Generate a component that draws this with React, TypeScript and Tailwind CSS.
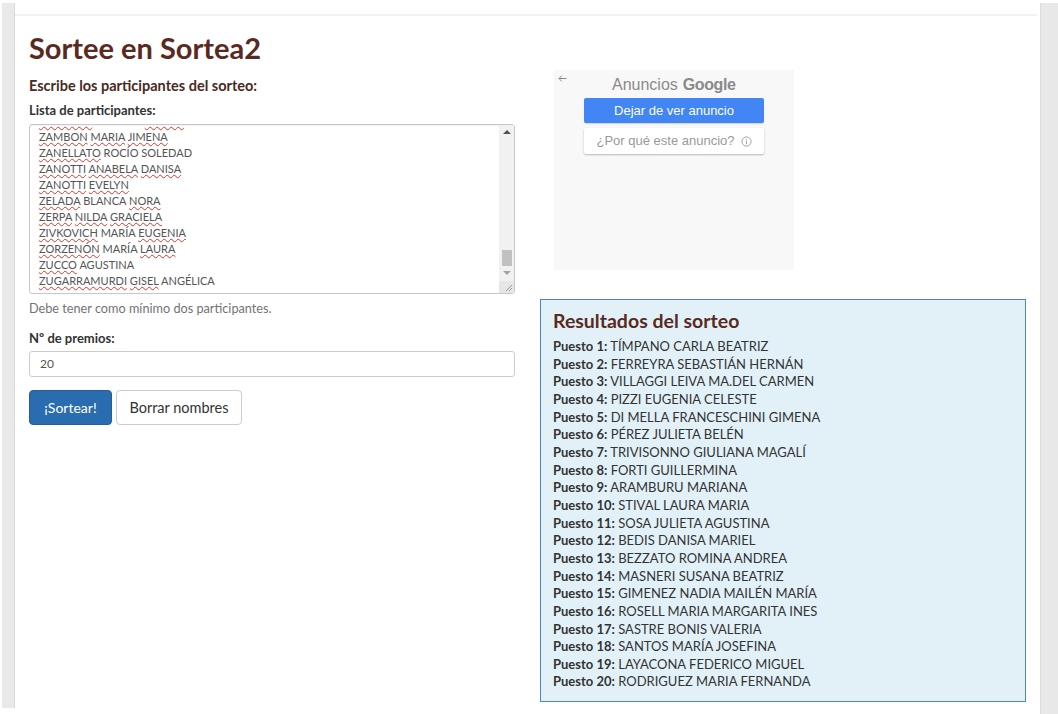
import React from 'react';

const names: { words: [string, boolean][] }[] = [
  { words: [['ZABALETA', true], ['VIRGINIA', false], ['LETICIA', true]] },
  { words: [['ZAMBON', true], ['MARIA', true], ['JIMENA', true]] },
  { words: [['ZANELLATO', true], ['ROCÍO', false], ['SOLEDAD', false]] },
  { words: [['ZANOTTI', true], ['ANABELA', true], ['DANISA', true]] },
  { words: [['ZANOTTI', true], ['EVELYN', true]] },
  { words: [['ZELADA', true], ['BLANCA', false], ['NORA', true]] },
  { words: [['ZERPA', true], ['NILDA', true], ['GRACIELA', true]] },
  { words: [['ZIVKOVICH', true], ['MARÍA', false], ['EUGENIA', true]] },
  { words: [['ZORZENÓN', true], ['MARÍA', false], ['LAURA', true]] },
  { words: [['ZUCCO', true], ['AGUSTINA', false]] },
  { words: [['ZUGARRAMURDI', true], ['GISEL', true], ['ANGÉLICA', false]] },
];

const results = [
  'TÍMPANO CARLA BEATRIZ',
  'FERREYRA SEBASTIÁN HERNÁN',
  'VILLAGGI LEIVA MA.DEL CARMEN',
  'PIZZI EUGENIA CELESTE',
  'DI MELLA FRANCESCHINI GIMENA',
  'PÉREZ JULIETA BELÉN',
  'TRIVISONNO GIULIANA MAGALÍ',
  'FORTI GUILLERMINA',
  'ARAMBURU MARIANA',
  'STIVAL LAURA MARIA',
  'SOSA JULIETA AGUSTINA',
  'BEDIS DANISA MARIEL',
  'BEZZATO ROMINA ANDREA',
  'MASNERI SUSANA BEATRIZ',
  'GIMENEZ NADIA MAILÉN MARÍA',
  'ROSELL MARIA MARGARITA INES',
  'SASTRE BONIS VALERIA',
  'SANTOS MARÍA JOSEFINA',
  'LAYACONA FEDERICO MIGUEL',
  'RODRIGUEZ MARIA FERNANDA',
];

function ParticipantsBox() {
  return (
    <div className="mt-[5px] flex h-[170px] rounded-[3px] border border-[#c8c8c8] bg-white shadow-[inset_0_1px_1px_rgba(0,0,0,0.06)]">
      <div className="flex-1 overflow-hidden pl-[9px]">
        <div className="-mt-[12px] text-[11px] leading-[16px] text-[#555]">
          {names.map((n, i) => (
            <div key={i} className="whitespace-nowrap">
              {n.words.map(([w, bad], j) => (
                <React.Fragment key={j}>
                  {j > 0 && ' '}
                  <span
                    className={
                      bad
                        ? 'underline decoration-wavy decoration-[#e0302a] decoration-1 underline-offset-[1px]'
                        : ''
                    }
                  >
                    {w}
                  </span>
                </React.Fragment>
              ))}
            </div>
          ))}
        </div>
      </div>
      {/* scrollbar */}
      <div className="flex w-[15px] flex-col items-center bg-[#f1f1f1]">
        <div className="mt-[5px] h-0 w-0 border-x-[4px] border-b-[4px] border-x-transparent border-b-[#505050]" />
        <div className="flex-1" />
        <div className="h-[16px] w-[10px] bg-[#c1c1c1]" />
        <div className="mt-[5px] h-0 w-0 border-x-[4px] border-t-[4px] border-x-transparent border-t-[#a3a3a3]" />
        <div className="mt-[6px] flex h-[12px] w-[15px] items-end justify-end bg-[#e6e6e6] pb-[1px] pr-[1px]">
          <svg width="8" height="8" viewBox="0 0 8 8">
            <path d="M7 1 L1 7 M7 4 L4 7" stroke="#9a9a9a" strokeWidth="1" />
          </svg>
        </div>
      </div>
    </div>
  );
}

function AdBlock() {
  return (
    <div className="ml-[14px] mt-[54px] flex h-[200px] w-[240px] flex-col items-center bg-[#f8f8f8] font-['Liberation_Sans',Arial,sans-serif]">
      <div className="flex h-[26px] w-full items-start">
        <svg className="ml-[4px] mt-[5px]" width="9" height="7" viewBox="0 0 9 7">
          <path d="M8.5 3.5 H1 M3.8 0.7 L1 3.5 L3.8 6.3" fill="none" stroke="#8a8a8a" strokeWidth="1" />
        </svg>
        <div className="ml-[45px] mt-[3px] flex items-baseline">
          <span className="text-[16px] text-[#8a8a8a]">Anuncios</span>
          <span className="ml-[5px] text-[16px] font-bold tracking-[-0.4px] text-[#8a8a8a]">Google</span>
        </div>
      </div>
      <div className="mt-[2px] flex h-[25px] w-[180px] items-center justify-center rounded-[2px] bg-[#4285f4] text-[13px] text-white shadow-[0_1px_1px_rgba(0,0,0,0.15)]">
        Dejar de ver anuncio
      </div>
      <div className="mt-[5px] flex h-[26px] w-[180px] items-center justify-center gap-[6px] rounded-[2px] bg-white text-[13px] text-[#999] shadow-[0_1px_2px_rgba(0,0,0,0.25)]">
        <span>¿Por qué este anuncio?</span>
        <svg width="11" height="11" viewBox="0 0 12 12">
          <circle cx="6" cy="6" r="5" fill="none" stroke="#9a9a9a" strokeWidth="1" />
          <rect x="5.5" y="5" width="1" height="4" fill="#9a9a9a" />
          <rect x="5.5" y="3" width="1" height="1" fill="#9a9a9a" />
        </svg>
      </div>
    </div>
  );
}

function ResultsBox() {
  return (
    <div className="mt-[29px] h-[403px] border border-[#4a86c5] bg-[#e2f1f8] pl-[12px] pt-[8px]">
      <h3 className="text-[19.5px] font-bold leading-[26px] text-[#5a2a1f]">Resultados del sorteo</h3>
      <div className="mt-[4px] text-[13px] leading-[17.65px] text-[#333]">
        {results.map((r, i) => (
          <div key={i} className="whitespace-nowrap">
            <b className="font-bold">Puesto {i + 1}:</b> {r}
          </div>
        ))}
      </div>
    </div>
  );
}

export default function App() {
  return (
    <div className="flex h-[714px] w-[1058px] overflow-hidden bg-white font-['Lato','Noto_Sans',sans-serif]">
      <div className="ml-[2px] mt-[3px] h-[705px] w-[13px] border-r border-[#d9d9d9] bg-[#e9e9e9]" />
      <div className="flex w-[1025px] flex-col">
        <div className="mt-[14px] h-[2px] w-[1022px] bg-[#f2f2f2]" />
        <div className="flex gap-[25px] pl-[14px]">
          {/* left column */}
          <div className="flex w-[486px] flex-col">
            <h1 className="mt-[15px] text-[29px] font-bold leading-[33px] text-[#5a2a1f]">Sortee en Sortea2</h1>
            <h4 className="mt-[11px] text-[14.5px] font-bold leading-[22px] text-[#4a2a22]">
              Escribe los participantes del sorteo:
            </h4>
            <label className="mt-[4px] text-[13px] font-bold leading-[18px] text-[#333]">Lista de participantes:</label>
            <ParticipantsBox />
            <p className="mt-[5px] text-[12.7px] leading-[18px] text-[#737373]">Debe tener como mínimo dos participantes.</p>
            <label className="mt-[12px] text-[13px] font-bold leading-[18px] text-[#333]">Nº de premios:</label>
            <div className="mt-[4px] flex h-[26px] items-center rounded-[3px] border border-[#ccc] bg-white pl-[10px] text-[12px] text-[#555]">
              20
            </div>
            <div className="mt-[13px] flex gap-[4px]">
              <button className="h-[35px] w-[83px] rounded-[4px] border border-[#245f9c] bg-[#2a6cb0] text-[14px] text-white">
                ¡Sortear!
              </button>
              <button className="h-[35px] w-[126px] rounded-[4px] border border-[#ccc] bg-white text-[14.5px] text-[#333]">
                Borrar nombres
              </button>
            </div>
          </div>
          {/* right column */}
          <div className="flex w-[486px] flex-col">
            <AdBlock />
            <ResultsBox />
          </div>
        </div>
      </div>
      <div className="mt-[3px] h-[711px] w-[18px] border-l border-[#dcdcdc] bg-[#e8e8e8]" />
    </div>
  );
}
